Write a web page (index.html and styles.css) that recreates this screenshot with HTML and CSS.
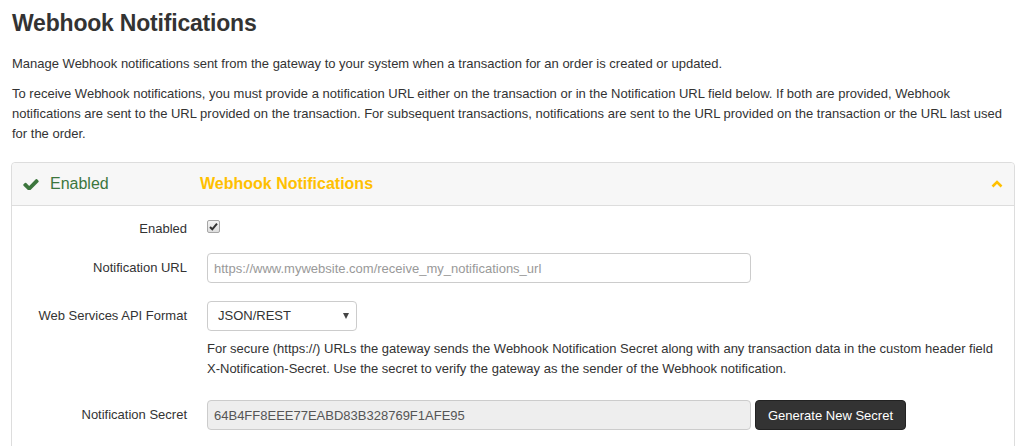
FILE: index.html
```html
<!DOCTYPE html>
<html lang="en">
<head>
<meta charset="utf-8">
<title>Webhook Notifications</title>
<link rel="stylesheet" href="styles.css">
</head>
<body>
<div class="page">
  <h1 class="title">Webhook Notifications</h1>
  <p class="intro">Manage Webhook notifications sent from the gateway to your system when a transaction for an order is created or updated.</p>
  <p class="intro intro-last">To receive Webhook notifications, you must provide a notification URL either on the transaction or in the Notification URL field below. If both are provided, Webhook notifications are sent to the URL provided on the transaction. For subsequent transactions, notifications are sent to the URL provided on the transaction or the URL last used for the order.</p>

  <div class="panel">
    <div class="panel-head">
      <div class="status">
        <svg class="check-icon" viewBox="121 330 1550 1100" width="16" height="11" aria-hidden="true"><path fill="#3c763d" d="M1671 566q0 40-28 68l-724 724-136 136q-28 28-68 28t-68-28l-136-136-362-362q-28-28-28-68t28-68l136-136q28-28 68-28t68 28l294 295 656-657q28-28 68-28t68 28l136 136q28 28 28 68z"/></svg>
        <span class="status-text">Enabled</span>
      </div>
      <div class="panel-title">Webhook Notifications</div>
      <svg class="chevron" viewBox="0 0 12 8" width="12" height="8" aria-hidden="true"><polyline points="1.5,6.5 6,2 10.5,6.5" fill="none" stroke="#ffc000" stroke-width="2.6"/></svg>
    </div>
    <div class="panel-body">
      <div class="row row-enabled">
        <label class="label">Enabled</label>
        <div class="control">
          <span class="checkbox"><svg viewBox="0 0 13 13" width="13" height="13" aria-hidden="true"><path d="M3 7 L5.3 9.3 L10 3.6" fill="none" stroke="#333" stroke-width="2"/></svg></span>
        </div>
      </div>
      <div class="row row-url">
        <label class="label">Notification URL</label>
        <div class="control">
          <input class="text-input" type="text" placeholder="https://www.mywebsite.com/receive_my_notifications_url">
        </div>
      </div>
      <div class="row row-format">
        <label class="label">Web Services API Format</label>
        <div class="control">
          <div class="select"><span>JSON/REST</span><span class="arrow"></span></div>
        </div>
      </div>
      <div class="row row-help">
        <div class="label"></div>
        <p class="help">For secure (https://) URLs the gateway sends the Webhook Notification Secret along with any transaction data in the custom header field X-Notification-Secret. Use the secret to verify the gateway as the sender of the Webhook notification.</p>
      </div>
      <div class="row row-secret">
        <label class="label">Notification Secret</label>
        <div class="control secret-control">
          <input class="text-input readonly" type="text" value="64B4FF8EEE77EABD83B328769F1AFE95" readonly>
          <button class="btn-dark" type="button">Generate New Secret</button>
        </div>
      </div>
    </div>
  </div>
</div>
</body>
</html>
```

FILE: styles.css
```css
* { box-sizing: border-box; }

html, body {
  margin: 0;
  background: #fff;
}

body {
  font-family: "Liberation Sans", Arial, Helvetica, sans-serif;
  font-size: 13px;
  line-height: 20px;
  color: #333;
}

.page {
  padding: 9px 12px 0 11px;
}

.title {
  margin: 0 0 17px 1px;
  font-size: 23px;
  line-height: 28px;
  letter-spacing: -0.2px;
  font-weight: bold;
  color: #333;
}

.intro {
  margin: 0 0 10px 1px;
}

.intro-last {
  margin-bottom: 18px;
}

.panel {
  border: 1px solid #ddd;
  border-radius: 4px;
  background: #fff;
  height: 300px;
}

.panel-head {
  display: flex;
  align-items: center;
  height: 43px;
  padding: 0 11px 0 11px;
  background: #f7f7f7;
  border-bottom: 1px solid #ddd;
  border-radius: 4px 4px 0 0;
}

.status {
  display: flex;
  align-items: center;
  width: 177px;
  flex: none;
}

.check-icon {
  display: block;
  margin-right: 11px;
}

.status-text {
  font-size: 16px;
  color: #3c763d;
}

.panel-title {
  flex: 1;
  font-size: 16px;
  font-weight: bold;
  color: #ffc000;
}

.chevron {
  display: block;
  margin-top: -1px;
}

.panel-body {
  padding: 13px 11px 0 0;
}

.row {
  display: grid;
  grid-template-columns: 175px 1fr;
  column-gap: 20px;
  align-items: center;
}

.label {
  text-align: right;
  color: #333;
}

.control {
  display: flex;
  align-items: center;
}

.row-enabled { height: 20px; margin-bottom: 14px; }
.row-url { margin-bottom: 18px; }
.row-format { margin-bottom: 8px; }
.row-help { margin-bottom: 21px; }

.checkbox {
  display: block;
  width: 13px;
  height: 13px;
  margin-top: -5px;
  border: 1px solid #a6a6a6;
  border-radius: 2px;
  background: linear-gradient(#f4f4f4, #dedede);
}

.checkbox svg {
  display: block;
  margin: -1px 0 0 -1px;
}

.text-input {
  width: 544px;
  height: 30px;
  padding: 0 6px;
  border: 1px solid #ccc;
  border-radius: 4px;
  font-family: inherit;
  font-size: 13px;
  color: #555;
  background: #fff;
  outline: none;
}

.text-input::placeholder {
  color: #999;
}

.text-input.readonly {
  background: #eee;
  color: #555;
}

.select {
  display: flex;
  align-items: center;
  justify-content: space-between;
  width: 150px;
  height: 30px;
  padding: 0 7px 0 10px;
  border: 1px solid #ccc;
  border-radius: 4px;
  background: #fff;
  color: #333;
}

.arrow {
  width: 0;
  height: 0;
  border-left: 3.5px solid transparent;
  border-right: 3.5px solid transparent;
  border-top: 6px solid #444;
}

.help {
  margin: 0;
  color: #333;
}

.secret-control {
  gap: 4px;
}

.btn-dark {
  height: 30px;
  width: 151px;
  padding: 0;
  border: 1px solid #222;
  border-radius: 4px;
  background: #333;
  color: #fff;
  font-family: inherit;
  font-size: 13px;
}
```
